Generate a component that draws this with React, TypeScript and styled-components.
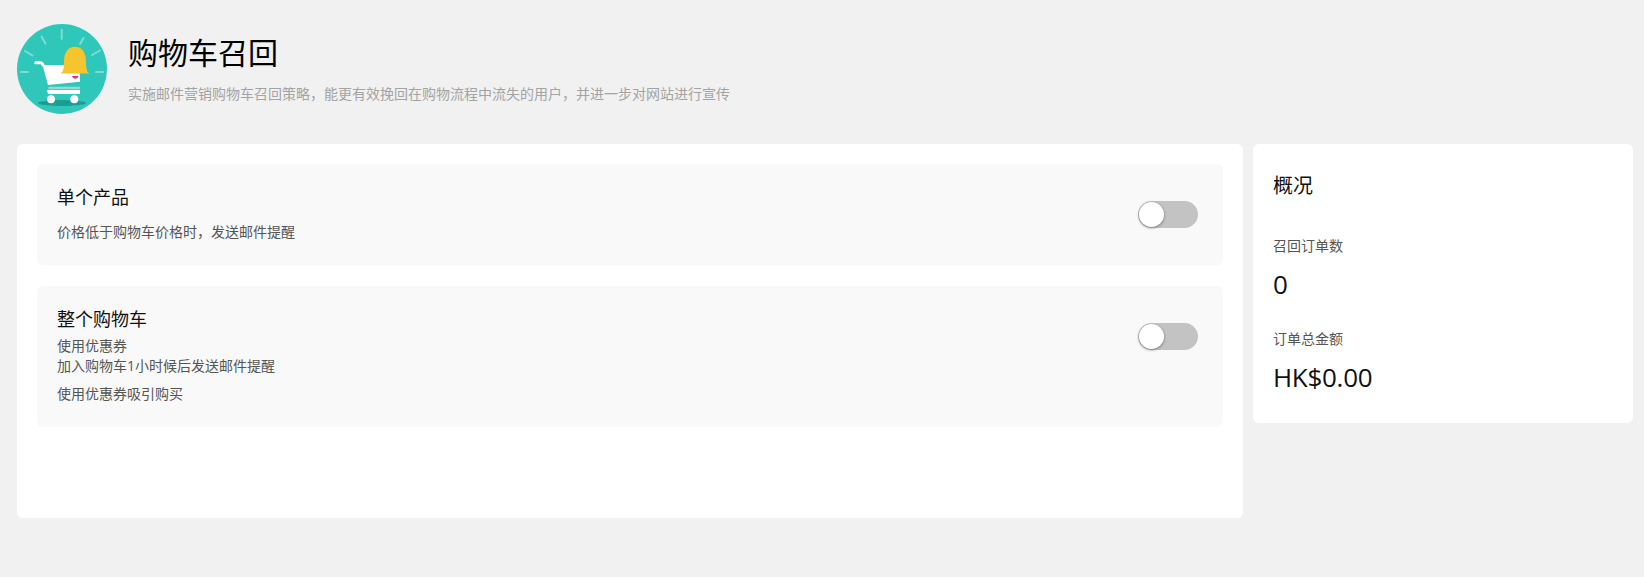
import * as React from 'react';
import styled, { createGlobalStyle } from 'styled-components';

const GlobalStyle = createGlobalStyle`
    html, body {
        margin: 0;
        background-color: #f1f1f1;
        font-family: 'Open Sans', 'Noto Sans CJK SC', sans-serif;
    }
`;

const Page = styled.div`
    padding: 24px 11px 0 17px;
`;

const Header = styled.div`
    display: flex;
    align-items: flex-start;
    gap: 21px;
    margin-bottom: 30px;
`;

const HeaderText = styled.div`
    padding-top: 8px;
`;

const Title = styled.h1`
    margin: 0 0 11px;
    font-size: 30px;
    line-height: 41px;
    font-weight: 400;
    color: #000;
`;

const Subtitle = styled.div`
    font-size: 14px;
    line-height: 20px;
    color: #a3a3a3;
`;

const Columns = styled.div`
    display: flex;
    align-items: flex-start;
    gap: 10px;
`;

const Card = styled.div`
    background-color: #fff;
    border-radius: 6px;
`;

const MainCard = styled(Card)`
    flex: 1;
    height: 374px;
    padding: 20px;
    box-sizing: border-box;
    display: flex;
    flex-direction: column;
    gap: 21px;
`;

const SideCard = styled(Card)`
    width: 380px;
    height: 279px;
    padding: 28px 20px 0;
    box-sizing: border-box;
`;

const Recall = styled.div`
    display: flex;
    justify-content: space-between;
    align-items: flex-start;
    padding: 21px 25px 23px 20px;
    background-color: #f9f9f9;
    border-radius: 6px;
`;

const RecallTitle = styled.div<{ $gap: number }>`
    font-size: 18px;
    line-height: 25px;
    color: #111;
    margin-bottom: ${(props) => props.$gap}px;
`;

const RecallLine = styled.div<{ $gap?: number }>`
    font-size: 14px;
    line-height: 20px;
    color: #555;
    margin-top: ${(props) => props.$gap || 0}px;
`;

const Switch = styled.div`
    position: relative;
    flex: none;
    width: 60px;
    height: 27px;
    margin-top: 16px;
    border-radius: 14px;
    background-color: #c3c3c3;
`;

const SwitchKnob = styled.div`
    position: absolute;
    left: 1px;
    top: 1px;
    width: 25px;
    height: 25px;
    border-radius: 50%;
    background-color: #fff;
    box-shadow: 0 1px 3px rgba(0, 0, 0, 0.4);
`;

const SideTitle = styled.div`
    font-size: 20px;
    line-height: 27px;
    color: #111;
    margin-bottom: 37px;
`;

const StatLabel = styled.div`
    font-size: 14px;
    line-height: 20px;
    color: #555;
`;

const StatValue = styled.div`
    font-size: 26px;
    line-height: 34px;
    letter-spacing: -0.3px;
    color: #111;
    margin: 11px 0 28px;
`;

const CartBellLogo = () => (
    <svg width="90" height="90" viewBox="0 0 90 90" style={{ flex: 'none' }}>
        <circle cx="45" cy="45" r="45" fill="#2fc7b9" />
        <g stroke="#7fdcd3" strokeWidth="2" strokeLinecap="round" fill="none">
            <path d="M44.7 6v9" />
            <path d="M24.500 12.500l4 7" />
            <path d="M8 27l7.500 4.500" />
            <path d="M4 48h7" />
            <path d="M63 20l3.500-6" />
            <path d="M75 31l8-4.500" />
            <path d="M79 48h7" />
        </g>
        <ellipse cx="45" cy="79" rx="24" ry="3" fill="#1f9c91" />
        <path d="M18.700 38.700h4.500q2 0 2.800 2.300" stroke="#fff" strokeWidth="3" strokeLinecap="round" fill="none" />
        <path d="M25.500 41h37l.5 16.700-32 3.300z" fill="#fff" />
        <path d="M31.500 64h31.500" stroke="#8fdfd7" strokeWidth="2.500" fill="none" />
        <path d="M30 66h33v4H31z" fill="#fff" />
        <circle cx="34" cy="75.300" r="4" fill="#fff" />
        <circle cx="57.300" cy="75.300" r="4" fill="#fff" />
        <path
            d="M43.500 49.500c3-2 3.500-6 3.500-12 0-9 4-14.800 11-14.800s11 5.800 11 14.800c0 6 .5 10 3.500 12z"
            fill="#f6c42c"
        />
        <path d="M55 52h6.500c-1 3.500-5.500 3.500-6.500 0z" fill="#e0356a" />
    </svg>
);

export default function App() {
    return (
        <Page>
            <GlobalStyle />
            <Header>
                <CartBellLogo />
                <HeaderText>
                    <Title>购物车召回</Title>
                    <Subtitle>
                        实施邮件营销购物车召回策略，能更有效挽回在购物流程中流失的用户，并进一步对网站进行宣传
                    </Subtitle>
                </HeaderText>
            </Header>
            <Columns>
                <MainCard>
                    <Recall>
                        <div>
                            <RecallTitle $gap={12}>单个产品</RecallTitle>
                            <RecallLine>价格低于购物车价格时，发送邮件提醒</RecallLine>
                        </div>
                        <Switch>
                            <SwitchKnob />
                        </Switch>
                    </Recall>
                    <Recall>
                        <div>
                            <RecallTitle $gap={4}>整个购物车</RecallTitle>
                            <RecallLine>使用优惠券</RecallLine>
                            <RecallLine>加入购物车1小时候后发送邮件提醒</RecallLine>
                            <RecallLine $gap={8}>使用优惠券吸引购买</RecallLine>
                        </div>
                        <Switch>
                            <SwitchKnob />
                        </Switch>
                    </Recall>
                </MainCard>
                <SideCard>
                    <SideTitle>概况</SideTitle>
                    <StatLabel>召回订单数</StatLabel>
                    <StatValue>0</StatValue>
                    <StatLabel>订单总金额</StatLabel>
                    <StatValue>HK$0.00</StatValue>
                </SideCard>
            </Columns>
        </Page>
    );
}
